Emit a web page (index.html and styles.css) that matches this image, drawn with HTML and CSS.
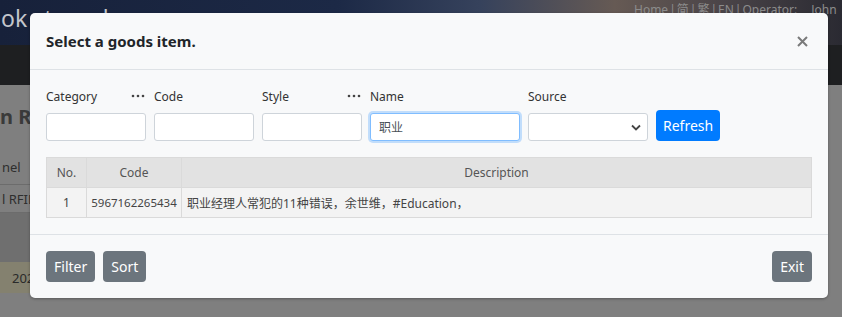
FILE: index.html
```html
<!DOCTYPE html>
<html>
<head>
    <title>Select a goods item</title>
    <link rel="stylesheet" href="styles.css">
</head>
<body>
    <div class="page">
        <header class="topbar">
            <span class="brand">ok store demo</span>
            <span class="toplinks">Home<i>|</i>简<i>|</i>繁<i>|</i>EN<i>|</i>Operator:<b>John</b></span>
        </header>
        <div class="menubar"></div>
        <main class="content">
            <h2 class="page-title">n RFID</h2>
            <table class="list">
                <tr class="list-head"><td>nel</td></tr>
                <tr class="list-row"><td>l RFID</td></tr>
                <tr class="list-band"><td>&nbsp;</td></tr>
                <tr class="list-hl"><td>2021</td></tr>
            </table>
        </main>
    </div>

    <div class="modal">
        <div class="modal-header">
            <h5 class="modal-title">Select a goods item.</h5>
            <svg class="close" width="11" height="11" viewBox="0 0 11 11">
                <path d="M1 1 L10 10 M10 1 L1 10" stroke="#7a7a7a" stroke-width="2" fill="none"/>
            </svg>
        </div>

        <div class="modal-body">
            <div class="filters">
                <div class="field">
                    <div class="label-row">
                        <span>Category</span>
                        <svg class="more" width="14" height="4" viewBox="0 0 14 4"><circle cx="2" cy="2" r="1.3"/><circle cx="7" cy="2" r="1.3"/><circle cx="12" cy="2" r="1.3"/></svg>
                    </div>
                    <input type="text" class="input w100">
                </div>
                <div class="field">
                    <div class="label-row"><span>Code</span></div>
                    <input type="text" class="input w100">
                </div>
                <div class="field">
                    <div class="label-row">
                        <span>Style</span>
                        <svg class="more" width="14" height="4" viewBox="0 0 14 4"><circle cx="2" cy="2" r="1.3"/><circle cx="7" cy="2" r="1.3"/><circle cx="12" cy="2" r="1.3"/></svg>
                    </div>
                    <input type="text" class="input w100">
                </div>
                <div class="field">
                    <div class="label-row"><span>Name</span></div>
                    <input type="text" class="input w150 focused" value="职业">
                </div>
                <div class="field">
                    <div class="label-row"><span>Source</span></div>
                    <div class="select">
                        <svg width="10" height="7" viewBox="0 0 10 7"><path d="M1 1.5 L5 5.5 L9 1.5" stroke="#444" stroke-width="1.8" fill="none"/></svg>
                    </div>
                </div>
                <button class="btn btn-primary">Refresh</button>
            </div>

            <table class="goods">
                <tr>
                    <th class="col-no">No.</th>
                    <th class="col-code">Code</th>
                    <th>Description</th>
                </tr>
                <tr>
                    <td class="col-no">1</td>
                    <td class="col-code code">5967162265434</td>
                    <td class="desc">职业经理人常犯的11种错误，余世维，#Education，</td>
                </tr>
            </table>
        </div>

        <div class="modal-footer">
            <div class="btn-group">
                <button class="btn btn-secondary">Filter</button>
                <button class="btn btn-secondary">Sort</button>
            </div>
            <button class="btn btn-secondary">Exit</button>
        </div>
    </div>
</body>
</html>
```

FILE: styles.css
```css
body {
    margin: 0;
    font-family: "Noto Sans", "Noto Sans CJK SC", sans-serif;
    background-color: #7f7f7f;
    overflow: hidden;
}

/* page behind the dialog, already dimmed */
.page {
    height: 317px;
    overflow: hidden;
}

.topbar {
    height: 45px;
    display: grid;
    grid-template-columns: 634px 1fr;
    white-space: nowrap;
    overflow: hidden;
    background: linear-gradient(90deg, #17213a 0%, #1c2946 40%, #36425c 57%, #665a54 73%, #4a4448 86%, #2a2a32 100%);
}

.brand {
    padding-left: 1px;
    font-size: 23px;
    line-height: 36px;
    color: #c4c6cc;
}

.toplinks {
    font-size: 12px;
    line-height: 20px;
    color: #8c8c8c;
}

.toplinks i {
    font-style: normal;
    margin: 0 1px;
}

.toplinks b {
    font-weight: normal;
    margin-left: 14px;
}

.menubar {
    height: 40px;
    background-color: #1e1f21;
}

.content {
    padding-top: 20px;
}

.page-title {
    margin: 0 0 21px 0;
    font-size: 20px;
    line-height: 24px;
    color: #3a3a3a;
    white-space: nowrap;
}

.list {
    border-collapse: collapse;
    width: 60px;
    font-size: 13px;
    color: #2e2e2e;
}

.list td {
    padding: 0 2px;
    white-space: nowrap;
}

.list-head td {
    height: 34px;
    border-bottom: 1px solid #6c6c6c;
}

.list-row td {
    height: 27px;
    border-bottom: 1px solid #6c6c6c;
}

.list-band td {
    height: 49px;
    background-color: #6f6f6f;
}

.list-hl td {
    height: 31px;
    background-color: #84816f;
    padding-left: 12px;
    color: #2a2a2a;
}

/* dialog */
.modal {
    position: absolute;
    left: 30px;
    top: 13px;
    width: 798px;
    background-color: #f8f9fa;
    border-radius: 5px;
    box-shadow: 0 1px 3px rgba(0, 0, 0, 0.3);
}

.modal-header {
    display: flex;
    align-items: center;
    padding: 16px;
    border-bottom: 1px solid #dee2e6;
}

.modal-title {
    margin: 0;
    flex: 1;
    font-size: 15px;
    line-height: 24px;
    font-weight: bold;
    color: #212529;
}

.close {
    margin-right: 4px;
}

.modal-body {
    padding: 16px;
}

.filters {
    display: flex;
    align-items: flex-end;
    gap: 8px;
}

.field {
    display: flex;
    flex-direction: column;
}

.label-row {
    display: flex;
    justify-content: space-between;
    align-items: center;
    height: 20px;
    margin-bottom: 7px;
    font-size: 12px;
    color: #333;
}

.more {
    fill: #444;
    margin-right: 1px;
}

.input {
    box-sizing: border-box;
    height: 28px;
    padding: 0 8px;
    border: 1px solid #ced4da;
    border-radius: 3px;
    background-color: #fff;
    font-family: "Noto Sans", "Noto Sans CJK SC", sans-serif;
    font-size: 12px;
    color: #495057;
    outline: none;
}

.w100 {
    width: 100px;
}

.w150 {
    width: 150px;
}

.input.focused {
    border-color: #80bdff;
    box-shadow: 0 0 0 2px rgba(0, 123, 255, 0.22);
}

.select {
    box-sizing: border-box;
    width: 120px;
    height: 28px;
    border: 1px solid #ced4da;
    border-radius: 3px;
    background-color: #fff;
    display: flex;
    align-items: center;
    justify-content: flex-end;
    padding-right: 6px;
}

.btn {
    height: 31px;
    padding: 0 7px;
    border: none;
    border-radius: 4px;
    font-family: "Noto Sans", sans-serif;
    font-size: 14px;
    color: #fff;
    cursor: pointer;
}

.btn-primary {
    background-color: #007bff;
}

.btn-secondary {
    background-color: #6c757d;
    padding: 0 8px;
}

.goods {
    width: 100%;
    margin-top: 16px;
    border-collapse: collapse;
    font-size: 12px;
    color: #444;
}

.goods th,
.goods td {
    height: 29px;
    padding: 0 5px;
    border: 1px solid #dadada;
    text-align: center;
    font-weight: normal;
}

.goods th {
    background-color: #e2e2e2;
    color: #555;
}

.goods td {
    background-color: #f3f3f3;
}

.goods td.code {
    padding: 0 3px;
    font-size: 11.5px;
}

.goods td.desc {
    text-align: left;
}

.col-no {
    width: 29px;
}

.col-code {
    width: 84px;
}

.modal-footer {
    display: flex;
    justify-content: space-between;
    padding: 16px;
    border-top: 1px solid #dee2e6;
}

.btn-group {
    display: flex;
    gap: 8px;
}
```
